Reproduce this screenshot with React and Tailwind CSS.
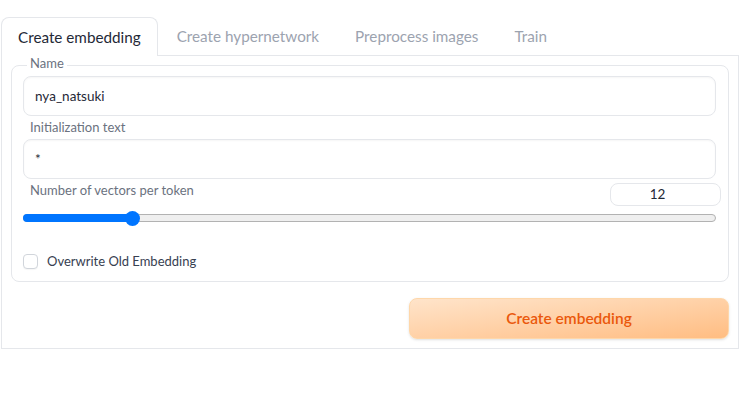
export default function App() {
  const font = { fontFamily: "Lato, 'Noto Sans', sans-serif" };
  return (
    <div className="w-[744px] h-[414px] bg-white" style={font}>
      <div className="pt-[17px] pl-[1px] pr-[5px]">
        <div className="flex items-end">
          <div className="relative z-10 -mb-px flex h-[39px] items-center rounded-t-lg border border-b-0 border-[#e5e7eb] bg-white px-[16px] text-[15.25px] text-[#1f2937]">
            Create embedding
          </div>
          <div className="flex h-[38px] items-center px-[19px] text-[15.25px] text-[#9ca3af]">Create hypernetwork</div>
          <div className="flex h-[38px] items-center pl-[17px] pr-[19px] text-[15.25px] text-[#9ca3af]">Preprocess images</div>
          <div className="flex h-[38px] items-center px-[17px] text-[15.25px] text-[#9ca3af]">Train</div>
        </div>
        <div className="border border-[#e5e7eb] px-[9px] pt-[9px] pb-[9px]">
          <div className="rounded-lg border border-[#e5e7eb] px-[11px] pb-[12px]">
            <div className="-mt-[11px] ml-[4px] w-fit bg-white px-[3px] text-[13px] leading-[16px] text-[#6b7280]">Name</div>
            <div className="mt-[5px] mr-[1px] flex h-[40px] items-center rounded-lg border border-[#e5e7eb] bg-white px-[11px] text-[13.5px] text-[#1f2937] shadow-[inset_0_1px_2px_rgba(0,0,0,0.04)]">
              nya_natsuki
            </div>
            <div className="mt-[3px] ml-[7px] text-[13px] leading-[16px] text-[#6b7280]">Initialization text</div>
            <div className="mt-[4px] mr-[1px] flex h-[40px] items-center rounded-lg border border-[#e5e7eb] bg-white px-[11px] text-[13.5px] text-[#1f2937] shadow-[inset_0_1px_2px_rgba(0,0,0,0.04)]">
              *
            </div>
            <div className="flex items-start justify-between pt-[3px] -mr-[4px]">
              <div className="ml-[7px] text-[13px] leading-[16px] text-[#6b7280]">Number of vectors per token</div>
              <div className="mt-[1px] flex h-[23px] w-[111px] items-center justify-center rounded-lg border border-[#e5e7eb] bg-white pr-[16px] text-[13.5px] text-[#1f2937]">
                12
              </div>
            </div>
            <div className="relative mt-[5px] mr-[1px] h-[14px]">
              <div className="absolute left-0 right-0 top-[3px] h-[8px] rounded-full border border-[#b2b2b2] bg-[#efefef]" />
              <div className="absolute left-0 top-[3px] h-[8px] w-[110px] rounded-full bg-[#0075ff]" />
              <div className="absolute left-[102px] top-0 h-[15px] w-[15px] rounded-full bg-[#0075ff]" />
            </div>
            <div className="mt-[28px] flex items-center gap-[9px]">
              <div className="h-[15px] w-[15px] rounded-[4px] border border-[#d1d5db] bg-white shadow-[0_1px_1px_rgba(0,0,0,0.04)]" />
              <div className="text-[13px] leading-[16px] text-[#374151]">Overwrite Old Embedding</div>
            </div>
          </div>
          <div className="mt-[16px] flex justify-end">
            <div className="flex h-[41px] w-[320px] items-center justify-center rounded-lg border border-[#fed7aa] bg-gradient-to-br from-[#ffe4ca] to-[#ffbd82] text-[15.5px] font-semibold text-[#ea580c] shadow-sm">
              Create embedding
            </div>
          </div>
        </div>
      </div>
    </div>
  );
}
